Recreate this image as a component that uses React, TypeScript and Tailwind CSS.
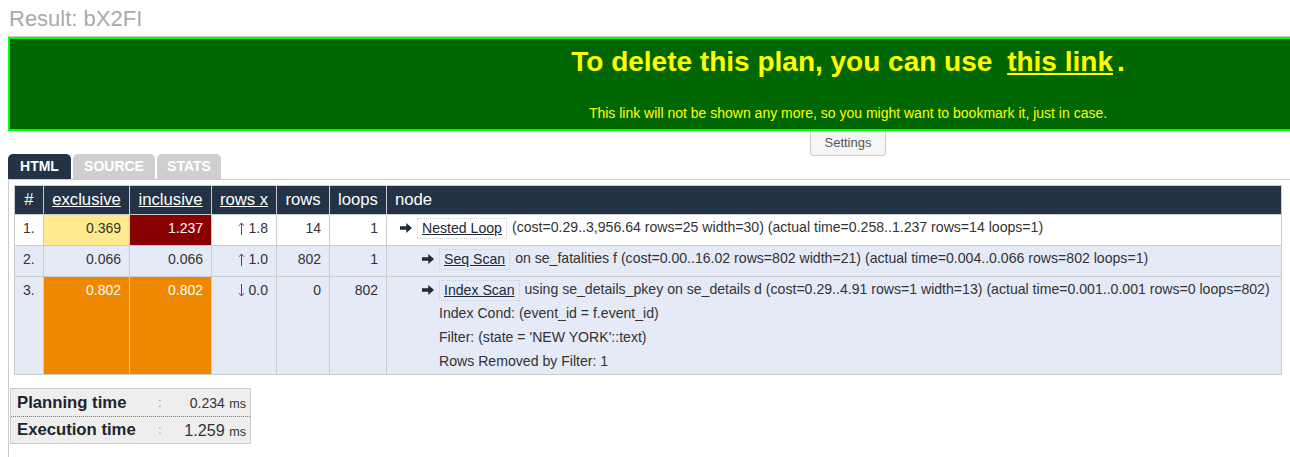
import React from "react";

type Row = {
  n: string;
  exc: string;
  inc: string;
  excCls: string;
  incCls: string;
  up: boolean;
  rx: string;
  rows: string;
  loops: string;
  lineCls: string;
  extraCls: string;
  name: string;
  rest: string;
  extra: string[];
  rowCls: string;
  tdCls: string;
};

const rows: Row[] = [
  {
    n: "1.",
    exc: "0.369",
    inc: "1.237",
    excCls: "bg-[#feea8c] text-[#333]",
    incCls: "bg-[#880000] text-white",
    up: true,
    rx: "1.8",
    rows: "14",
    loops: "1",
    lineCls: "pl-[13px]",
    extraCls: "pl-[30px]",
    name: "Nested Loop",
    rest: "(cost=0.29..3,956.64 rows=25 width=30) (actual time=0.258..1.237 rows=14 loops=1)",
    extra: [],
    rowCls: "bg-white",
    tdCls: "pb-[6px]",
  },
  {
    n: "2.",
    exc: "0.066",
    inc: "0.066",
    excCls: "",
    incCls: "",
    up: true,
    rx: "1.0",
    rows: "802",
    loops: "1",
    lineCls: "pl-[35px]",
    extraCls: "pl-[52px]",
    name: "Seq Scan",
    rest: "on se_fatalities f (cost=0.00..16.02 rows=802 width=21) (actual time=0.004..0.066 rows=802 loops=1)",
    extra: [],
    rowCls: "bg-[#e4eaf6]",
    tdCls: "pb-[6px]",
  },
  {
    n: "3.",
    exc: "0.802",
    inc: "0.802",
    excCls: "bg-[#ee8800] text-white",
    incCls: "bg-[#ee8800] text-white",
    up: false,
    rx: "0.0",
    rows: "0",
    loops: "802",
    lineCls: "pl-[35px]",
    extraCls: "pl-[52px]",
    name: "Index Scan",
    rest: "using se_details_pkey on se_details d (cost=0.29..4.91 rows=1 width=13) (actual time=0.001..0.001 rows=0 loops=802)",
    extra: [
      "Index Cond: (event_id = f.event_id)",
      "Filter: (state = 'NEW YORK'::text)",
      "Rows Removed by Filter: 1",
    ],
    rowCls: "bg-[#e4eaf6]",
    tdCls: "pb-[1px]",
  },
];

const Arrow = () => (
  <svg width="12" height="10" viewBox="0 0 12 10" className="shrink-0">
    <path d="M0 3.3H6.3V0L12 5L6.3 10V6.7H0Z" fill="#1f2b38" />
  </svg>
);

const Dir = ({ up }: { up: boolean }) => (
  <svg width="7" height="13" viewBox="0 0 7 13" className="inline-block align-[-2px] mr-[4px]">
    {up ? (
      <path d="M3.5 1V13M1 3.8L3.5 1L6 3.8" stroke="#5b3a7e" strokeWidth="1" fill="none" />
    ) : (
      <path d="M3.5 0V12M1 9.2L3.5 12L6 9.2" stroke="#5b3a7e" strokeWidth="1" fill="none" />
    )}
  </svg>
);

export default function App() {
  return (
    <div className="w-[1290px] h-[457px] overflow-hidden bg-white font-['Liberation_Sans',Arial,sans-serif]">
      <div className="w-[1688px] pl-[8px]">
        <div className="h-[37px] border-b border-[#cccccc] pt-[6px] pl-[1px] text-[22px] leading-[25px] text-[#aaaaaa]">
          Result: bX2FI
        </div>
        <div className="h-[94px] border-2 border-[#00ff00] bg-[#006600] text-[#ffff00] text-center pt-[7px]">
          <div className="text-[28px] leading-[32px] font-bold whitespace-nowrap">
            To delete this plan, you can use{" "}
            <a className="underline ml-[7px] mr-[4px]">this link</a>.
          </div>
          <div className="mt-[27px] text-[14px] leading-[16px] whitespace-nowrap">
            This link will not be shown any more, so you might want to bookmark it, just in case.
          </div>
        </div>
        <div className="flex justify-center h-[23px]">
          <div className="w-[76px] h-[25px] shrink-0 border border-t-0 border-[#cccccc] rounded-b-[4px] bg-[#f6f6f6] text-[13px] leading-[24px] text-[#555555] text-center">
            Settings
          </div>
        </div>
        <div className="flex gap-[2px] h-[25px] text-[14px] leading-[25px] font-bold text-white">
          <div className="w-[63px] text-center rounded-t-[5px] bg-[#233345]">HTML</div>
          <div className="w-[82px] text-center rounded-t-[5px] bg-[#cfcfcf]">SOURCE</div>
          <div className="w-[64px] text-center rounded-t-[5px] bg-[#cfcfcf]">STATS</div>
        </div>
        <div className="border-t border-l border-[#cccccc] pt-[5px] pl-[5px] pb-[20px]">
          <table className="border-collapse table-fixed w-[1268px] text-[14px] text-[#333333]">
            <colgroup>
              <col className="w-[29px]" />
              <col className="w-[86px]" />
              <col className="w-[82px]" />
              <col className="w-[65px]" />
              <col className="w-[53px]" />
              <col className="w-[57px]" />
              <col />
            </colgroup>
            <thead>
              <tr className="bg-[#233345] text-white text-[16.7px] leading-[22px]">
                <th className="border border-[#cccccc] font-normal py-[3px] text-center">#</th>
                <th className="border border-[#cccccc] font-normal py-[3px] text-center">
                  <span className="underline">exclusive</span>
                </th>
                <th className="border border-[#cccccc] font-normal py-[3px] text-center">
                  <span className="underline">inclusive</span>
                </th>
                <th className="border border-[#cccccc] font-normal py-[3px] text-center">
                  <span className="underline">rows x</span>
                </th>
                <th className="border border-[#cccccc] font-normal py-[3px] text-center">rows</th>
                <th className="border border-[#cccccc] font-normal py-[3px] text-center">loops</th>
                <th className="border border-[#cccccc] font-normal py-[3px] text-left pl-[8px]">node</th>
              </tr>
            </thead>
            <tbody>
              {rows.map((r) => (
                <tr key={r.n} className={r.rowCls}>
                  <td className="border border-[#cccccc] align-top pt-[2px] pl-[8px] leading-[22px]">{r.n}</td>
                  <td className={`border border-[#cccccc] align-top pt-[2px] pr-[8px] text-right leading-[22px] ${r.excCls}`}>
                    {r.exc}
                  </td>
                  <td className={`border border-[#cccccc] align-top pt-[2px] pr-[8px] text-right leading-[22px] ${r.incCls}`}>
                    {r.inc}
                  </td>
                  <td className="border border-[#cccccc] align-top pt-[2px] pr-[8px] text-right leading-[22px] whitespace-nowrap">
                    <Dir up={r.up} />
                    {r.rx}
                  </td>
                  <td className="border border-[#cccccc] align-top pt-[2px] pr-[8px] text-right leading-[22px]">{r.rows}</td>
                  <td className="border border-[#cccccc] align-top pt-[2px] pr-[8px] text-right leading-[22px]">{r.loops}</td>
                  <td className={`border border-[#cccccc] align-top pt-[2px] text-[14.1px] ${r.tdCls}`}>
                    <div className={`flex items-center h-[22px] whitespace-nowrap ${r.lineCls}`}>
                      <Arrow />
                      <span className="ml-[5px] border border-dotted border-[#cfcfcf] px-[4px] py-[2px] leading-[15px] underline text-[#222a35]">
                        {r.name}
                      </span>
                      <span className="ml-[5px]">{r.rest}</span>
                    </div>
                    {r.extra.map((e) => (
                      <div key={e} className={`leading-[24px] whitespace-nowrap ${r.extraCls}`}>
                        {e}
                      </div>
                    ))}
                  </td>
                </tr>
              ))}
            </tbody>
          </table>

          <div className="mt-[13px] -ml-[4px] w-[241px] border border-[#cccccc] bg-[#eeeeee]">
            <div className="flex items-center h-[28px] border-b border-dotted border-[#777777]">
              <div className="w-[147px] pl-[6px] text-[16.7px] font-bold text-[#1c2430]">Planning time</div>
              <div className="text-[13px] text-[#999999]">:</div>
              <div className="flex-1 text-right pr-[4px] text-[#333333] whitespace-nowrap">
                <span className="text-[14px]">0.234</span> <span className="text-[12.5px]">ms</span>
              </div>
            </div>
            <div className="flex items-center h-[26px]">
              <div className="w-[147px] pl-[6px] text-[16.7px] font-bold text-[#1c2430]">Execution time</div>
              <div className="text-[13px] text-[#999999]">:</div>
              <div className="flex-1 text-right pr-[4px] text-[#333333] whitespace-nowrap">
                <span className="text-[16.2px]">1.259</span> <span className="text-[12.5px]">ms</span>
              </div>
            </div>
          </div>
        </div>
      </div>
    </div>
  );
}
